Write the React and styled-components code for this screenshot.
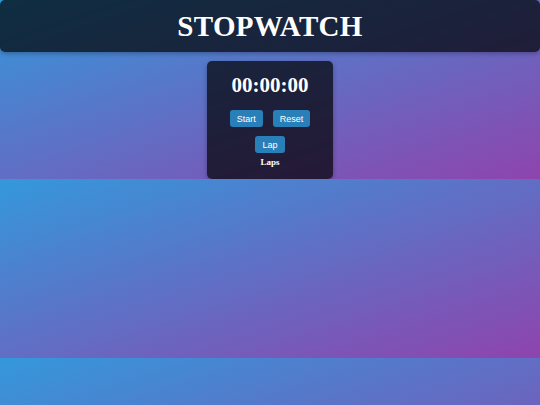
import React, { useState } from 'react';
import styled, { createGlobalStyle } from 'styled-components';

const GlobalStyle = createGlobalStyle`
  body {
    margin: 0;
    font-family: "Liberation Serif", "Times New Roman", serif;
    background: linear-gradient(to bottom right, #3498db, #8e44ad);
    color: #fff;
  }
`;

const Header = styled.header`
  height: 52px;
  display: flex;
  align-items: center;
  justify-content: center;
  background: rgba(0, 0, 0, 0.7);
  border-radius: 5px;
  box-shadow: 0 2px 4px rgba(0, 0, 0, 0.25);
`;

const Title = styled.h1`
  margin: 0;
  font-size: 29px;
  font-weight: bold;
  letter-spacing: 0.3px;
`;

const Main = styled.main`
  display: flex;
  justify-content: center;
  padding-top: 9px;
`;

const Card = styled.section`
  width: 126px;
  box-sizing: border-box;
  padding: 12px 0 12px;
  display: flex;
  flex-direction: column;
  align-items: center;
  background: rgba(0, 0, 0, 0.7);
  border-radius: 5px;
  box-shadow: 0 2px 5px rgba(0, 0, 0, 0.3);
`;

const Time = styled.div`
  font-size: 21px;
  font-weight: bold;
  line-height: 24px;
`;

const Row = styled.div`
  display: flex;
  justify-content: center;
  gap: 10px;
  margin-top: ${p => p.$top}px;
`;

const Button = styled.button`
  height: 17px;
  padding: 0 7px;
  border: none;
  border-radius: 3px;
  background: #2980b9;
  color: #fff;
  font-family: "Liberation Sans", Arial, sans-serif;
  font-size: 9px;
  cursor: pointer;
`;

const LapsTitle = styled.h3`
  margin: 4px 0 0;
  font-size: 9px;
  line-height: 10px;
  font-weight: bold;
`;

const fmt = n => String(n).padStart(2, '0');

export default function App() {
  const [time] = useState(0);
  const h = Math.floor(time / 3600);
  const m = Math.floor((time % 3600) / 60);
  const s = time % 60;

  return (
    <>
      <GlobalStyle />
      <Header>
        <Title>STOPWATCH</Title>
      </Header>
      <Main>
        <Card>
          <Time>{fmt(h)}:{fmt(m)}:{fmt(s)}</Time>
          <Row $top={13}>
            <Button>Start</Button>
            <Button>Reset</Button>
          </Row>
          <Row $top={9}>
            <Button>Lap</Button>
          </Row>
          <LapsTitle>Laps</LapsTitle>
        </Card>
      </Main>
    </>
  );
}
